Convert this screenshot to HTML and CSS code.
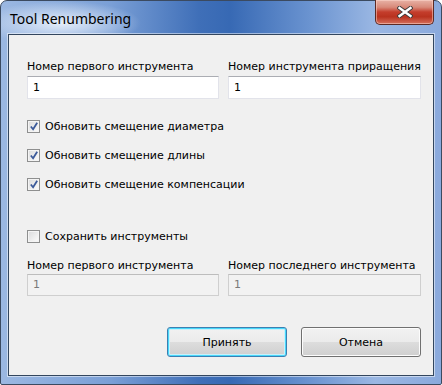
FILE: index.html
```html
<!DOCTYPE html>
<html lang="ru">
<head>
    <meta charset="UTF-8">
    <title>Tool Renumbering</title>
    <link rel="stylesheet" href="styles.css">
</head>
<body>
    <div class="window">
        <div class="titlebar">
            <span class="title">Tool Renumbering</span>
            <button class="close" aria-label="Close">
                <svg width="16" height="12" viewBox="0 0 16 12">
                    <path d="M2.5 2 L13.5 10 M13.5 2 L2.5 10" stroke="#3a3a3a" stroke-width="4.2" stroke-linecap="square"/>
                    <path d="M2.5 2 L13.5 10 M13.5 2 L2.5 10" stroke="#ffffff" stroke-width="2.4" stroke-linecap="square"/>
                </svg>
            </button>
        </div>

        <div class="client">
            <div class="fields">
                <div class="field">
                    <label>Номер первого инструмента</label>
                    <div class="input">1</div>
                </div>
                <div class="field">
                    <label>Номер инструмента приращения</label>
                    <div class="input">1</div>
                </div>
            </div>

            <div class="checks">
                <div class="check"><span class="box"><svg width="11" height="11" viewBox="0 0 11 11"><path d="M2 5.5 L4.5 8.5 L9 1.5" fill="none" stroke="#3b5a9a" stroke-width="2"/></svg></span>Обновить смещение диаметра</div>
                <div class="check"><span class="box"><svg width="11" height="11" viewBox="0 0 11 11"><path d="M2 5.5 L4.5 8.5 L9 1.5" fill="none" stroke="#3b5a9a" stroke-width="2"/></svg></span>Обновить смещение длины</div>
                <div class="check"><span class="box"><svg width="11" height="11" viewBox="0 0 11 11"><path d="M2 5.5 L4.5 8.5 L9 1.5" fill="none" stroke="#3b5a9a" stroke-width="2"/></svg></span>Обновить смещение компенсации</div>
            </div>

            <div class="check save"><span class="box"></span>Сохранить инструменты</div>

            <div class="fields disabled">
                <div class="field">
                    <label>Номер первого инструмента</label>
                    <div class="input">1</div>
                </div>
                <div class="field">
                    <label>Номер последнего инструмента</label>
                    <div class="input">1</div>
                </div>
            </div>

            <div class="buttons">
                <button class="btn default">Принять</button>
                <button class="btn">Отмена</button>
            </div>
        </div>
    </div>
</body>
</html>
```

FILE: styles.css
```css
body {
    margin: 0;
    padding: 0;
    background: #ffffff;
    font-family: "DejaVu Sans", Tahoma, sans-serif;
    font-size: 11px;
    color: #000;
}

.window {
    width: 442px;
    height: 385px;
    box-sizing: border-box;
    border: 1px solid #3b4a60;
    border-radius: 7px 7px 2px 2px;
    padding: 0 7px 8px 7px;
    display: flex;
    flex-direction: column;
    background:
        radial-gradient(ellipse 80px 22px at 60px 22px, rgba(235, 242, 252, 0.95), rgba(235, 242, 252, 0) 100%),
        linear-gradient(90deg, #9bb8e2 0%, #7a9fd6 25%, #3f6fb8 45%, #3769b4 52%, #6a93d0 70%, #9ab7e3 85%, #8aa9dc 100%);
}

.titlebar {
    height: 33px;
    display: flex;
    align-items: flex-start;
}

.title {
    font-family: "Noto Sans", "Open Sans", sans-serif;
    font-size: 14px;
    color: #000;
    margin: 8px 0 0 2px;
}

.close {
    margin: -1px 0 0 auto;
    width: 59px;
    height: 25px;
    padding: 0;
    border: 1px solid #5c2a24;
    border-top: none;
    border-radius: 0 0 5px 5px;
    background: linear-gradient(180deg, #e8b2a6 0%, #d88a7a 30%, #c43d2c 50%, #b9321f 70%, #d5705c 100%);
    box-shadow: inset 0 0 0 1px rgba(255, 220, 210, 0.5);
    display: flex;
    align-items: center;
    justify-content: center;
}

.client {
    flex: 1;
    background: #f0f0f0;
    border: 1px solid #33465e;
    box-shadow: 0 0 0 1px rgba(255, 255, 255, 0.5);
    padding: 25px 12px 0 18px;
    display: flex;
    flex-direction: column;
}

.fields {
    display: grid;
    grid-template-columns: 192px 193px;
    column-gap: 9px;
}

.field label {
    display: block;
    line-height: 13px;
    white-space: nowrap;
}

.input {
    margin-top: 3px;
    height: 23px;
    box-sizing: border-box;
    background: #fff;
    border: 1px solid #e2e3ea;
    border-top-color: #abadb3;
    padding: 4px 0 0 5px;
    line-height: 14px;
}

.disabled .input {
    margin-top: 2px;
    height: 22px;
    background: #f2f2f2;
    border: 1px solid #cfcfcf;
    border-top-color: #bdbdbd;
    color: #7a7a7a;
    padding-top: 3px;
}

.checks {
    margin-top: 13px;
}

.check {
    display: flex;
    align-items: center;
    height: 29px;
    white-space: nowrap;
}

.box {
    width: 13px;
    height: 13px;
    box-sizing: border-box;
    border: 1px solid #8e8f8f;
    margin-right: 5px;
    background: linear-gradient(135deg, #d9dadb 0%, #f6f6f6 80%);
    box-shadow: inset 0 0 0 1px #f4f4f4;
    display: flex;
    align-items: center;
    justify-content: center;
}

.check .box svg {
    margin-left: 1px;
}

.save {
    margin-top: 23px;
}

.fields.disabled {
    margin-top: 8px;
}

.buttons {
    margin-top: 31px;
    display: flex;
    justify-content: flex-end;
    gap: 14px;
}

.btn {
    width: 120px;
    height: 30px;
    font-family: "DejaVu Sans", Tahoma, sans-serif;
    font-size: 11px;
    color: #000;
    border: 1px solid #707070;
    border-radius: 3px;
    background: linear-gradient(180deg, #f2f2f2 0%, #ebebeb 49%, #dddddd 50%, #cfcfcf 100%);
    box-shadow: inset 0 0 0 1px #fcfcfc;
    padding: 0;
}

.btn.default {
    border-color: #3c7fb1;
    box-shadow: inset 0 0 0 1px #48d8fb, inset 0 0 0 2px #c8f0fb;
}
```
